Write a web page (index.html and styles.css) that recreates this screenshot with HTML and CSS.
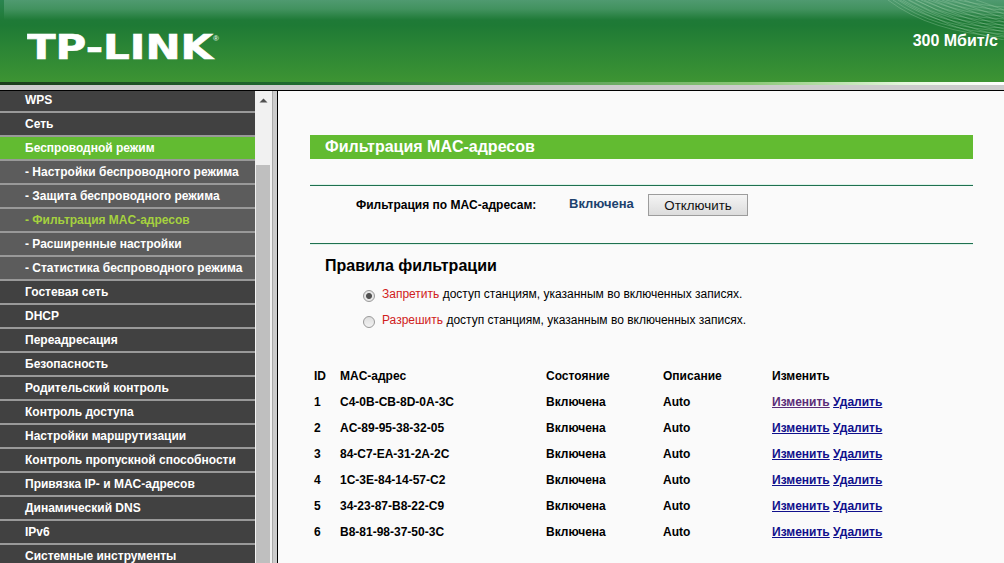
FILE: index.html
```
<!DOCTYPE html>
<html lang="ru">

<head>
    <meta charset="utf-8">
    <title>TP-LINK</title>
    <link rel="stylesheet" href="styles.css">
</head>

<body>
    <div class="header">
        <svg class="logo" width="200" height="40" viewBox="0 0 200 40">
            <text class="logo-text" x="0" y="32.5" textLength="186" lengthAdjust="spacingAndGlyphs">TP-LINK</text>
            <text class="logo-reg" x="186" y="15">®</text>
        </svg>
        <svg class="waves" width="124" height="40" viewBox="0 0 124 40">
            <path d="M8 0 Q50 32 124 37M13 0 Q55 30 124 34M18 0 Q60 28 124 31M23 0 Q65 26 124 28M29 0 Q70 24 124 25M35 0 Q76 21 124 22M41 0 Q82 18 124 19M48 0 Q88 15 124 16M56 0 Q94 12 124 13M66 0 Q100 9 124 10M78 0 Q106 6 124 7" />
            <path d="M20 0 Q70 30 124 40M28 0 Q76 27 124 36M36 0 Q82 24 124 32M44 0 Q88 21 124 29M53 0 Q94 18 124 26M62 0 Q100 15 124 22M72 0 Q106 12 124 18M84 0 Q110 9 124 14M96 0 Q114 6 124 10" />
        </svg>
        <div class="model">300 Мбит/с</div>
    </div>
    <div class="header-line"></div>

    <div class="frames">
        <ul class="menu">
            <li>WPS</li>
            <li>Сеть</li>
            <li class="open">Беспроводной режим</li>
            <li class="sub">- Настройки беспроводного режима</li>
            <li class="sub">- Защита беспроводного режима</li>
            <li class="sub current">- Фильтрация MAC-адресов</li>
            <li class="sub">- Расширенные настройки</li>
            <li class="sub">- Статистика беспроводного режима</li>
            <li>Гостевая сеть</li>
            <li>DHCP</li>
            <li>Переадресация</li>
            <li>Безопасность</li>
            <li>Родительский контроль</li>
            <li>Контроль доступа</li>
            <li>Настройки маршрутизации</li>
            <li>Контроль пропускной способности</li>
            <li>Привязка IP- и MAC-адресов</li>
            <li>Динамический DNS</li>
            <li>IPv6</li>
            <li>Системные инструменты</li>
        </ul>
        <div class="scrollbar">
            <svg class="arrow" width="9" height="5" viewBox="0 0 9 5"><path d="M0.5 4.5L4.5 0.5L8.5 4.5z" /></svg>
            <div class="thumb"></div>
        </div>
        <div class="splitter"></div>

        <div class="main">
            <h1>Фильтрация MAC-адресов</h1>
            <div class="status">
                <span class="label">Фильтрация по MAC-адресам:</span>
                <span class="value">Включена</span>
                <button type="button">Отключить</button>
            </div>
            <h2>Правила фильтрации</h2>
            <label class="rule"><span class="radio checked"></span><span><em>Запретить</em> доступ станциям, указанным во включенных записях.</span></label>
            <label class="rule"><span class="radio"></span><span><em>Разрешить</em> доступ станциям, указанным во включенных записях.</span></label>

            <table>
                <tr><th class="id">ID</th><th class="mac">MAC-адрес</th><th class="state">Состояние</th><th class="desc">Описание</th><th>Изменить</th></tr>
                <tr><td>1</td><td>C4-0B-CB-8D-0A-3C</td><td>Включена</td><td>Auto</td><td><a class="visited" href="#">Изменить</a> <a href="#">Удалить</a></td></tr>
                <tr><td>2</td><td>AC-89-95-38-32-05</td><td>Включена</td><td>Auto</td><td><a href="#">Изменить</a> <a href="#">Удалить</a></td></tr>
                <tr><td>3</td><td>84-C7-EA-31-2A-2C</td><td>Включена</td><td>Auto</td><td><a href="#">Изменить</a> <a href="#">Удалить</a></td></tr>
                <tr><td>4</td><td>1C-3E-84-14-57-C2</td><td>Включена</td><td>Auto</td><td><a href="#">Изменить</a> <a href="#">Удалить</a></td></tr>
                <tr><td>5</td><td>34-23-87-B8-22-C9</td><td>Включена</td><td>Auto</td><td><a href="#">Изменить</a> <a href="#">Удалить</a></td></tr>
                <tr><td>6</td><td>B8-81-98-37-50-3C</td><td>Включена</td><td>Auto</td><td><a href="#">Изменить</a> <a href="#">Удалить</a></td></tr>
            </table>
        </div>
    </div>
</body>

</html>
```
FILE: styles.css
```
* {
    box-sizing: border-box;
}

body {
    margin: 0;
    height: 563px;
    overflow: hidden;
    font-family: "Liberation Sans", Arial, sans-serif;
    font-size: 12px;
    background-color: #fafafa;
}

.header {
    position: relative;
    display: flex;
    justify-content: space-between;
    height: 82px;
    padding: 26px 6px 0 27px;
    background: linear-gradient(#4f9a70 0, #42925f 9px, #1f7a37 20px, #1e7a35 25px, #2b8535 48px, #3d9433 82px);
}

.header::before {
    content: "";
    position: absolute;
    left: 0;
    top: 0;
    width: 4px;
    height: 20px;
    background: linear-gradient(#2b8550, #1f7a37);
}

.logo-text {
    font: bold 33px "DejaVu Sans", sans-serif;
    fill: #fff;
    stroke: #fff;
    stroke-width: 0.6;
}

.logo-reg {
    font: bold 8px "Liberation Sans", sans-serif;
    fill: #dff0df;
}

.waves {
    position: absolute;
    right: 0;
    top: 0;
}

.waves path {
    fill: none;
    stroke: #a5d3b0;
    stroke-width: 0.6;
    opacity: 0.55;
}

.model {
    padding-top: 5px;
    font-size: 16px;
    font-weight: bold;
    line-height: 19px;
    color: #fff;
}

.header-line {
    height: 9px;
    background: linear-gradient(#ccc, #ccc) 0 3px / 100% 5px no-repeat, linear-gradient(#000, #000) 0 8px / 100% 1px no-repeat, linear-gradient(90deg, #1c3c1c, #1f6b30 30%, #8cc878 75%, #e4f7dc 90%, #fff);
}

.frames {
    display: flex;
    height: 472px;
}

.menu {
    width: 255px;
    margin: 0;
    padding: 0;
    overflow: hidden;
    list-style: none;
}

.menu li {
    height: 24px;
    padding-left: 25px;
    border-bottom: 2px solid #999;
    background-color: #414141;
    color: #fff;
    font-weight: bold;
    line-height: 22px;
    white-space: nowrap;
}

.menu li:first-child {
    height: 22px;
    line-height: 18px;
}

.menu .open {
    background-color: #62bb31;
}

.menu .sub {
    background-color: #5c5c5c;
}

.menu .current {
    color: #a5d13f;
}

.scrollbar {
    width: 17px;
    padding: 7px 2px 0 1px;
    background-color: #f1f1f1;
}

.arrow {
    display: block;
    margin-left: 3px;
    fill: #505050;
}

.thumb {
    height: 410px;
    margin-top: 62px;
    background-color: #bfbfbf;
}

.splitter {
    width: 6px;
    border-left: 1px solid #aaa;
    border-right: 1px solid #000;
    background-color: #ccc;
}

.main {
    width: 695px;
    padding: 44px 0 0 32px;
}

h1 {
    width: 663px;
    height: 24px;
    margin: 0;
    padding-left: 15px;
    background-color: #62bb31;
    color: #fff;
    font-size: 16px;
    line-height: 23px;
}

.status {
    display: flex;
    width: 663px;
    height: 59px;
    margin-top: 26px;
    padding-left: 46px;
    border-top: 1px solid #1f7050;
    border-bottom: 1px solid #1f7050;
    box-shadow: 0 1px #dff3ea, 0 -1px #dff3ea;
    font-weight: bold;
}

.label {
    width: 213px;
    padding-top: 12px;
}

.value {
    width: 79px;
    padding-top: 10px;
    color: #1d426e;
    font-size: 13px;
}

button {
    width: 100px;
    height: 22px;
    margin-top: 8px;
    padding: 0;
    border: 1px solid #9c9c9c;
    background: linear-gradient(#f4f4f4, #dcdcdc);
    color: #111;
    font: 13.33px "Liberation Sans", Arial, sans-serif;
}

h2 {
    margin: 12px 0 0 15px;
    font-size: 16px;
    line-height: 20px;
}

.rule {
    display: flex;
    height: 26px;
    margin-left: 53px;
    padding-top: 11px;
    line-height: 14px;
}

.rule em {
    color: #d02020;
    font-style: normal;
}

.radio {
    width: 12px;
    height: 12px;
    margin: 3px 7px 0 0;
    border: 1px solid #999;
    border-radius: 50%;
    background: linear-gradient(#dedede, #f2f2f2);
}

.checked {
    background: radial-gradient(circle, #505050 2.5px, #e6e6e6 3.5px);
}

table {
    margin-top: 35px;
    margin-left: 4px;
    border-collapse: collapse;
    font-weight: bold;
}

th,
td {
    height: 26px;
    padding: 0;
    text-align: left;
    white-space: nowrap;
}

.id {
    width: 26px;
}

.mac {
    width: 206px;
}

.state {
    width: 117px;
}

.desc {
    width: 109px;
}

a {
    color: #10108c;
}

.visited {
    color: #5a2d78;
}
```
